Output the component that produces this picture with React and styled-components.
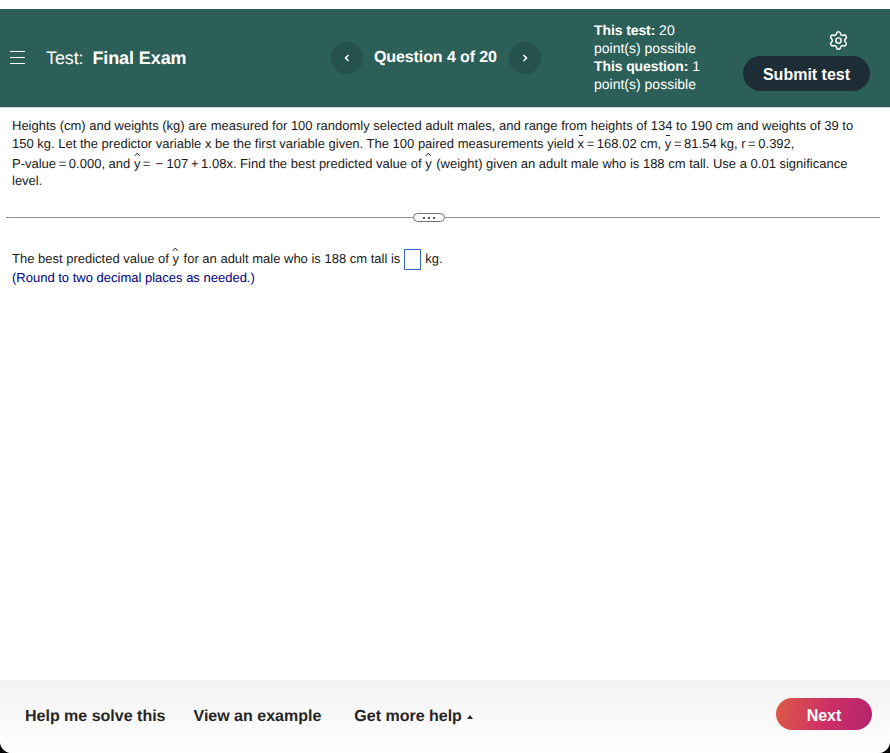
import React from 'react';
import styled, { createGlobalStyle } from 'styled-components';
import { Settings } from 'lucide-react';

const GlobalStyle = createGlobalStyle`
  html, body {
    margin: 0;
    padding: 0;
    height: 100%;
    background: #000;
    overflow: hidden;
  }
  body {
    font-family: 'Liberation Sans', Arial, sans-serif;
    -webkit-font-smoothing: antialiased;
    text-rendering: geometricPrecision;
  }
`;

const Page = styled.div`
  display: flex;
  flex-direction: column;
  height: 753px;
  padding-top: 9px;
  box-sizing: border-box;
  background: #fff;
  border-radius: 0 0 12px 12px;
  overflow: hidden;
`;

const Header = styled.header`
  display: grid;
  grid-template-columns: 331px 263px 1fr;
  align-items: center;
  height: 98px;
  flex-shrink: 0;
  background: #2c5f57;
  border-bottom: 1px solid #c5d8da;
  box-sizing: content-box;
  color: #fff;
`;

const TitleArea = styled.div`
  display: flex;
  align-items: center;
  padding-left: 10px;
`;

const Burger = styled.span`
  display: flex;
  flex-direction: column;
  justify-content: space-between;
  width: 15px;
  height: 13px;
  margin: -2px 21px 0 0;

  i {
    display: block;
    height: 1px;
    background: #fff;
  }
`;

const TestName = styled.div`
  font-size: 18px;
  letter-spacing: -0.1px;

  b {
    margin-left: 4px;
  }
`;

const QuestionNav = styled.div`
  display: flex;
  align-items: center;
`;

const NavButton = styled.button`
  display: flex;
  align-items: center;
  justify-content: center;
  width: 32px;
  height: 32px;
  padding: 0;
  border: 0;
  border-radius: 50%;
  background: #25524d;
  color: #fff;
`;

const QuestionLabel = styled.div`
  margin: 0 12px 0 11px;
  font-size: 16px;
  font-weight: 700;
  letter-spacing: -0.1px;
  white-space: nowrap;
`;

const HeaderRight = styled.div`
  display: flex;
  align-items: center;
  justify-content: space-between;
  padding-right: 20px;
`;

const Points = styled.div`
  width: 130px;
  margin-top: -2px;
  font-size: 14px;
  line-height: 18px;

  b {
    letter-spacing: -0.1px;
  }
`;

const Actions = styled.div`
  display: flex;
  flex-direction: column;
  align-items: flex-end;
  gap: 5px;
  margin-top: 5px;

  svg {
    margin-right: 21px;
  }
`;

const SubmitButton = styled.button`
  width: 127px;
  height: 35px;
  padding: 2px 0 0;
  border: 0;
  border-radius: 18px;
  background: #1d2d36;
  color: #fff;
  font: 700 16px 'Liberation Sans', Arial, sans-serif;
`;

const Content = styled.main`
  flex: 1;
  padding: 9px 10px 0 6px;
  color: #1a1a1a;
  font-size: 13px;
`;

const Question = styled.div`
  padding: 0 6px;
`;

const TextLine = styled.div`
  height: ${p => p.$height || 18}px;
  line-height: 18px;
  white-space: nowrap;
`;

const Accented = styled.span`
  position: relative;
  display: inline-block;
  margin-right: ${p => p.$after || 0}px;
`;

const Eq = styled.span`
  margin: 0 ${p => p.$space || 2.6}px;
`;

const Bar = styled.i`
  position: absolute;
  top: 0;
  left: 1px;
  right: 1px;
  height: 1px;
  background: #222;
`;

const Hat = styled.svg`
  position: absolute;
  top: -3px;
  left: 0;
  width: 6.5px;
  height: 5px;
`;

const Divider = styled.div`
  position: relative;
  height: 1px;
  margin: 27px 0 0;
  background: #8b9094;
`;

const MoreHandle = styled.span`
  position: absolute;
  left: 407px;
  top: -4px;
  display: flex;
  align-items: center;
  justify-content: center;
  gap: 3px;
  width: 32px;
  height: 9px;
  box-sizing: border-box;
  border: 1px solid #6b7580;
  border-radius: 5px;
  background: #fff;

  i {
    width: 2px;
    height: 2px;
    background: #555;
  }
`;

const Answer = styled.div`
  padding: 0 6px;
  margin-top: 31px;
`;

const AnswerBox = styled.span`
  display: inline-block;
  width: 17px;
  height: 21px;
  margin: 0 4px;
  border: 1px solid #3366cc;
  box-sizing: border-box;
  vertical-align: middle;
`;

const Hint = styled.div`
  color: #00007f;
  line-height: 18px;
`;

const Footer = styled.footer`
  display: flex;
  align-items: center;
  height: 68px;
  flex-shrink: 0;
  padding: 0 18px 5px 25px;
  background: linear-gradient(#f2f2f2, #fff);
`;

const HelpLink = styled.a`
  margin: 5px ${p => p.$gap}px 0 0;
  color: #262626;
  font-size: 16px;
  font-weight: 700;
  white-space: nowrap;
`;

const Caret = styled.span`
  display: inline-block;
  margin-left: 5px;
  vertical-align: 2px;
  border-left: 3.5px solid transparent;
  border-right: 3.5px solid transparent;
  border-bottom: 4px solid #262626;
`;

const NextButton = styled.button`
  width: 96px;
  height: 32px;
  margin-left: auto;
  padding: 3px 0 0;
  border: 0;
  border-radius: 16px;
  background: linear-gradient(100deg, #dc5a45 0%, #cd2f66 55%, #b3246e 100%);
  color: #fff;
  font: 700 16px 'Liberation Sans', Arial, sans-serif;
`;

const Chevron = ({ flip }) => (
  <svg width="6" height="8" viewBox="0 0 6 8" fill="none" stroke="#fff" strokeWidth="1.5">
    <path d={flip ? 'M1.5 1 L4.5 4 L1.5 7' : 'M4.5 1 L1.5 4 L4.5 7'} />
  </svg>
);

const YHat = () => (
  <Accented $after={1}>
    y
    <Hat viewBox="0 0 6 5" fill="none" stroke="#222" strokeWidth="0.9">
      <path d="M0.5 4 L3 1 L5.5 4" />
    </Hat>
  </Accented>
);

const Over = ({ children }) => (
  <Accented>
    {children}
    <Bar />
  </Accented>
);

const App = () => (
  <Page>
    <GlobalStyle />
    <Header>
      <TitleArea>
        <Burger>
          <i />
          <i />
          <i />
        </Burger>
        <TestName>
          Test: <b>Final Exam</b>
        </TestName>
      </TitleArea>
      <QuestionNav>
        <NavButton aria-label="Previous question">
          <Chevron />
        </NavButton>
        <QuestionLabel>Question 4 of 20</QuestionLabel>
        <NavButton aria-label="Next question">
          <Chevron flip />
        </NavButton>
      </QuestionNav>
      <HeaderRight>
        <Points>
          <b>This test:</b> 20
          <br />
          point(s) possible
          <br />
          <b>This question:</b> 1
          <br />
          point(s) possible
        </Points>
        <Actions>
          <Settings size={21} strokeWidth={1.7} color="#fff" />
          <SubmitButton>Submit test</SubmitButton>
        </Actions>
      </HeaderRight>
    </Header>
    <Content>
      <Question>
        <TextLine>
          Heights (cm) and weights (kg) are measured for 100 randomly selected adult males, and range from heights of 134 to 190 cm and weights of 39 to
        </TextLine>
        <TextLine $height={20}>
          150 kg. Let the predictor variable x be the first variable given. The 100 paired measurements yield <Over>x</Over><Eq>=</Eq>168.02 cm, <Over>y</Over><Eq>=</Eq>81.54 kg, r<Eq>=</Eq>0.392,
        </TextLine>
        <TextLine $height={17}>
          P-value<Eq>=</Eq>0.000, and <YHat /><Eq $space={1.4}>=</Eq> − 107<Eq>+</Eq>1.08x. Find the best predicted value of <YHat /> (weight) given an adult male who is 188 cm tall. Use a 0.01 significance
        </TextLine>
        <TextLine>level.</TextLine>
      </Question>
      <Divider>
        <MoreHandle>
          <i />
          <i />
          <i />
        </MoreHandle>
      </Divider>
      <Answer>
        <TextLine $height={20}>
          The best predicted value of <YHat /> for an adult male who is 188 cm tall is
          <AnswerBox />
          kg.
        </TextLine>
        <Hint>(Round to two decimal places as needed.)</Hint>
      </Answer>
    </Content>
    <Footer>
      <HelpLink $gap={28}>Help me solve this</HelpLink>
      <HelpLink $gap={33}>View an example</HelpLink>
      <HelpLink $gap={0}>
        Get more help
        <Caret />
      </HelpLink>
      <NextButton>Next</NextButton>
    </Footer>
  </Page>
);

export default App;
